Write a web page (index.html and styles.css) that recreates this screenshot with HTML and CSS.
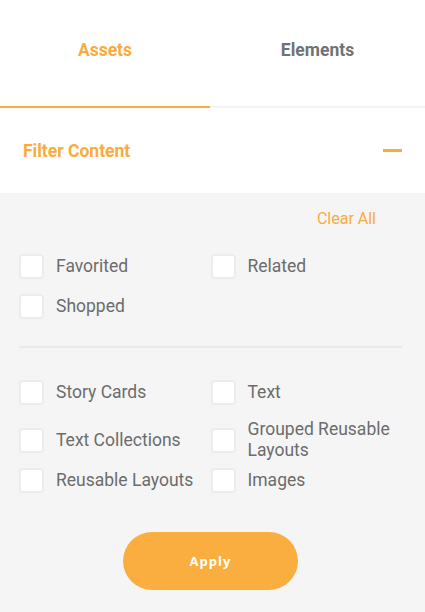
FILE: index.html
```html
<!DOCTYPE html>
<html lang="en">
<head>
    <meta charset="UTF-8" />
    <title>Filter Content</title>
    <link rel="stylesheet" href="styles.css">
</head>
<body>
    <div class="tabs">
        <div class="tab active">Assets</div>
        <div class="tab">Elements</div>
    </div>

    <div class="filter-head">
        <span>Filter Content</span>
        <span class="minus"></span>
    </div>

    <div class="filter-body">
        <div class="clear-row"><a class="clear">Clear All</a></div>

        <div class="options">
            <label class="option"><span class="box"></span><span class="text">Favorited</span></label>
            <label class="option"><span class="box"></span><span class="text">Related</span></label>
            <label class="option"><span class="box"></span><span class="text">Shopped</span></label>
        </div>

        <div class="divider"></div>

        <div class="options second">
            <label class="option"><span class="box"></span><span class="text">Story Cards</span></label>
            <label class="option"><span class="box"></span><span class="text">Text</span></label>
            <label class="option beside-tall"><span class="box"></span><span class="text">Text Collections</span></label>
            <label class="option tall"><span class="box"></span><span class="text">Grouped Reusable Layouts</span></label>
            <label class="option"><span class="box"></span><span class="text">Reusable Layouts</span></label>
            <label class="option"><span class="box"></span><span class="text">Images</span></label>
        </div>

        <div class="actions">
            <button class="apply">Apply</button>
        </div>
    </div>
</body>
</html>
```

FILE: styles.css
```css
body {
    margin: 0; padding: 0;
    font-family: Roboto, "Liberation Sans", sans-serif;
    background-color: #f5f5f5;
    width: 425px;
    height: 612px;
    overflow: hidden;
}
.tabs {
    display: grid;
    grid-template-columns: 210px 1fr;
    background-color: #fff;
}
.tab {
    height: 100px;
    padding-bottom: 6px;
    display: flex;
    align-items: center;
    justify-content: center;
    font-size: 17.5px;
    font-weight: bold;
    color: #6f7375;
    border-bottom: 2px solid #f3f3f3;
}
.tab.active {
    color: #f9ab3c;
    border-bottom-color: #f9ab3c;
}
.filter-head {
    height: 85px;
    padding: 0 23px;
    display: flex;
    align-items: center;
    justify-content: space-between;
    background-color: #fff;
    color: #f9ab3c;
    font-size: 17.5px;
    font-weight: bold;
}
.minus {
    width: 19px;
    height: 3px;
    background-color: #f9ab3c;
}
.filter-body {
    padding: 17px 23px 0 19px;
}
.clear-row {
    display: flex;
    justify-content: flex-end;
    padding-right: 26px;
    margin-bottom: 26px;
}
.clear {
    font-size: 16px;
    line-height: 18px;
    color: #f9ab3c;
    cursor: pointer;
}
.options {
    display: grid;
    grid-template-columns: 1fr 1fr;
    row-gap: 16px;
}
.option {
    display: flex;
    align-items: center;
    height: 24px;
    cursor: pointer;
}
.box {
    flex: none;
    width: 21px;
    height: 21px;
    border: 2px solid #ececec;
    border-radius: 4px;
    background-color: #fff;
    margin-right: 12px;
}
.text {
    font-size: 17.5px;
    line-height: 21px;
    color: #6c6c6c;
}
.option.tall {
    height: 40px;
    margin-bottom: -8px;
}
.option.beside-tall {
    margin-top: 8px;
}
.divider {
    height: 2px;
    background-color: #e9e9e9;
    margin: 28px 0 32px;
}
.actions {
    display: flex;
    justify-content: center;
    margin-top: 40px;
}
.apply {
    width: 175px;
    height: 58px;
    border: none;
    border-radius: 29px;
    background-color: #f9ae3f;
    color: #fff;
    font-family: "Open Sans", sans-serif;
    font-size: 13px;
    font-weight: bold;
    letter-spacing: 1px;
    cursor: pointer;
}
```
